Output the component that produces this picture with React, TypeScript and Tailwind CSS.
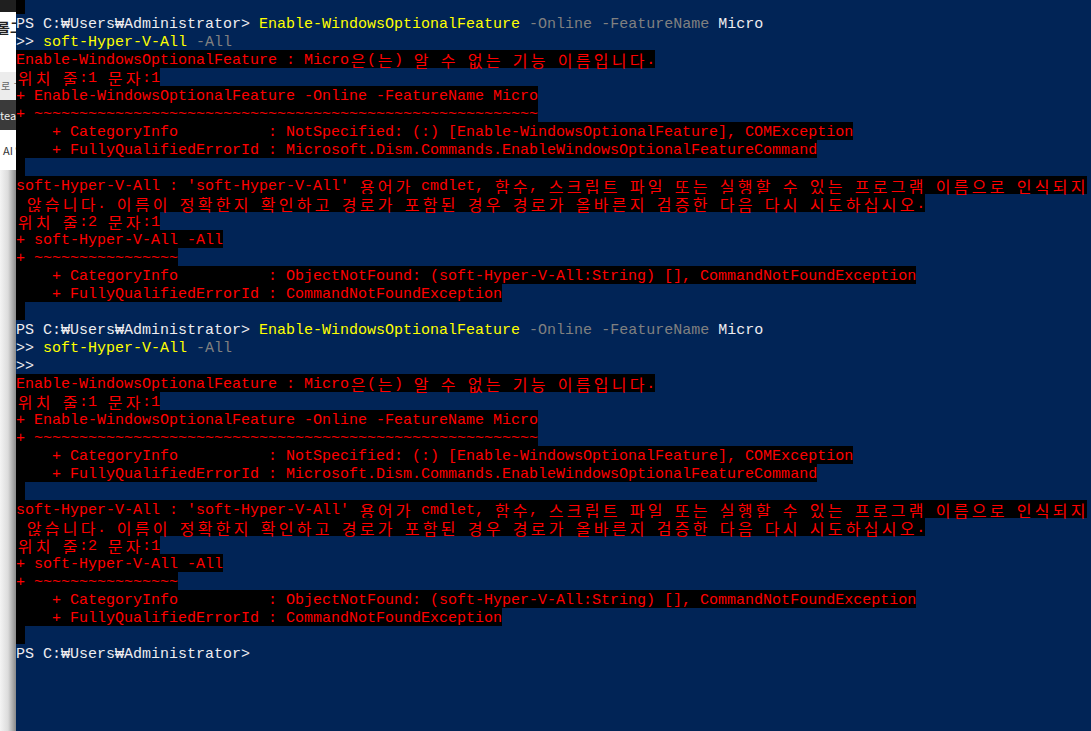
import React from "react";

const HANGUL = /([\uAC00-\uD7A3]+)/;

// Hangul takes two console cells, so every syllable gets an 18px box
const K = ({ t }: { t: string }) => (
  <>
    {t.split(HANGUL).map((p, i) =>
      i % 2
        ? Array.from(p).map((ch, j) => (
            <span
              key={i + "-" + j}
              className="inline-block w-[18px] h-[18px] align-top text-center leading-[20px] font-['Noto_Sans_CJK_KR',sans-serif] text-[16px]"
            >
              {ch}
            </span>
          ))
        : p
    )}
  </>
);

const Line = ({ children }: { children?: React.ReactNode }) => (
  <div className="h-[18px] leading-[22px] whitespace-pre">{children}</div>
);

const W = ({ children }: { children: React.ReactNode }) => <span className="text-[#eeedf0]">{children}</span>;
const Y = ({ children }: { children: React.ReactNode }) => <span className="text-[#ffff00]">{children}</span>;
const G = ({ children }: { children: React.ReactNode }) => <span className="text-[#808080]">{children}</span>;

const E = ({ t }: { t: string }) => (
  <Line>
    <span className="inline-block h-[18px] bg-black align-top text-[#ff0000]">
      <K t={t} />
    </span>
  </Line>
);

const BlankErr = () => (
  <Line>
    <span className="inline-block h-[18px] w-[9px] bg-black align-top" />
  </Line>
);

const Prompt = () => (
  <Line>
    <W>PS C:₩Users₩Administrator&gt; </W>
    <Y>Enable-WindowsOptionalFeature</Y> <G>-Online</G> <G>-FeatureName</G> <W>Micro</W>
  </Line>
);

const ErrorBlock = () => (
  <>
    <E t="Enable-WindowsOptionalFeature : Micro은(는) 알 수 없는 기능 이름입니다." />
    <E t="위치 줄:1 문자:1" />
    <E t="+ Enable-WindowsOptionalFeature -Online -FeatureName Micro" />
    <E t="+ ~~~~~~~~~~~~~~~~~~~~~~~~~~~~~~~~~~~~~~~~~~~~~~~~~~~~~~~~" />
    <E t="    + CategoryInfo          : NotSpecified: (:) [Enable-WindowsOptionalFeature], COMException" />
    <E t="    + FullyQualifiedErrorId : Microsoft.Dism.Commands.EnableWindowsOptionalFeatureCommand" />
    <BlankErr />
    <E t="soft-Hyper-V-All : 'soft-Hyper-V-All' 용어가 cmdlet, 함수, 스크립트 파일 또는 실행할 수 있는 프로그램 이름으로 인식되지" />
    <E t=" 않습니다. 이름이 정확한지 확인하고 경로가 포함된 경우 경로가 올바른지 검증한 다음 다시 시도하십시오." />
    <E t="위치 줄:2 문자:1" />
    <E t="+ soft-Hyper-V-All -All" />
    <E t="+ ~~~~~~~~~~~~~~~~" />
    <E t="    + CategoryInfo          : ObjectNotFound: (soft-Hyper-V-All:String) [], CommandNotFoundException" />
    <E t="    + FullyQualifiedErrorId : CommandNotFoundException" />
    <BlankErr />
  </>
);

const SideStrip = () => (
  <div className="w-[16px] shrink-0 flex flex-col overflow-hidden font-['Noto_Sans_CJK_KR',sans-serif]">
    <div className="h-[12px] bg-[#1f1f1f]" />
    <div className="h-[60px] bg-white relative">
      <span className="absolute left-[-3px] top-[6px] text-[14px] leading-[18px] font-bold text-[#222] whitespace-nowrap">롤그</span>
    </div>
    <div className="h-[28px] bg-[#ececec] relative">
      <span className="absolute left-[1px] top-[8px] text-[10px] leading-[12px] text-[#666] whitespace-nowrap">로 ㄱ</span>
    </div>
    <div className="h-[30px] bg-[#3a3a3a] relative">
      <span className="absolute left-0 top-[9px] text-[11px] leading-[12px] text-[#eee] whitespace-nowrap">tea</span>
    </div>
    <div className="h-[40px] bg-white relative">
      <span className="absolute left-[3px] top-[13px] text-[11px] leading-[14px] text-[#333] whitespace-nowrap">AI 앱</span>
    </div>
    <div className="flex-1 bg-gradient-to-r from-[#f4f4f4] via-[#dcdcdc] to-[#8a8a8a]" />
  </div>
);

export default function App() {
  return (
    <div className="flex w-[1091px] h-[731px] overflow-hidden bg-[#012456]">
      <SideStrip />
      <div className="flex-1 bg-[#012456] text-[15px] font-['Liberation_Mono','DejaVu_Sans_Mono',monospace] text-[#eeedf0] overflow-hidden">
        <div className="h-[14px]">
          <span className="inline-block h-[14px] w-[9px] bg-black align-top" />
        </div>
        <Prompt />
        <Line>
          <W>&gt;&gt; </W>
          <Y>soft-Hyper-V-All</Y> <G>-All</G>
        </Line>
        <ErrorBlock />
        <Prompt />
        <Line>
          <W>&gt;&gt; </W>
          <Y>soft-Hyper-V-All</Y> <G>-All</G>
        </Line>
        <Line>
          <W>&gt;&gt;</W>
        </Line>
        <ErrorBlock />
        <Line>
          <W>PS C:₩Users₩Administrator&gt;</W>
        </Line>
      </div>
    </div>
  );
}
